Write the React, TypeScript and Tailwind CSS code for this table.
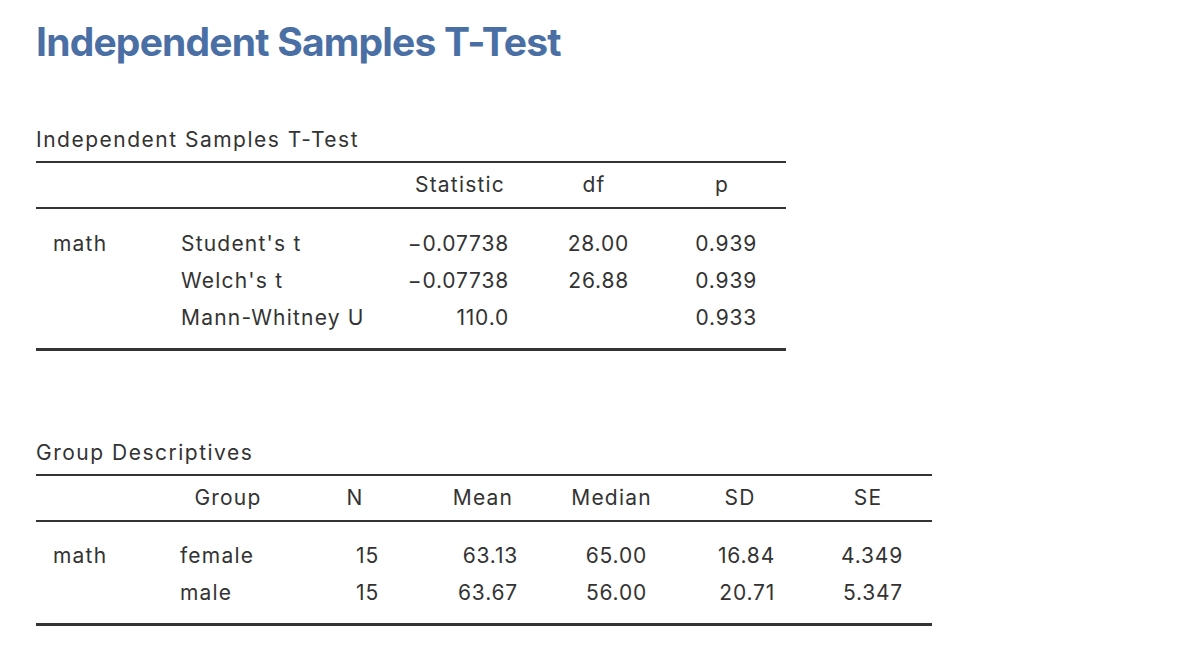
const FONT = { fontFamily: "Inter, 'Noto Sans', 'Liberation Sans', sans-serif" };

type Align = "left" | "center" | "right";

type Col = { w: number; head: string; align: Align; pad: string };

const T_TEST_COLS: Col[] = [
  { w: 129, head: "", align: "left", pad: "pl-[17px]" },
  { w: 225, head: "", align: "left", pad: "pl-[16px]" },
  { w: 140, head: "Statistic", align: "right", pad: "pr-[21px]" },
  { w: 128, head: "df", align: "right", pad: "pr-[29px]" },
  { w: 128, head: "p", align: "right", pad: "pr-[29px]" },
];

const T_TEST_ROWS = [
  ["math", "Student's t", "\u22120.07738", "28.00", "0.939"],
  ["", "Welch's t", "\u22120.07738", "26.88", "0.939"],
  ["", "Mann-Whitney U", "110.0", "", "0.933"],
];

const DESC_COLS: Col[] = [
  { w: 129, head: "", align: "left", pad: "pl-[17px]" },
  { w: 126, head: "Group", align: "left", pad: "pl-[15px]" },
  { w: 128, head: "N", align: "right", pad: "pr-[40px]" },
  { w: 128, head: "Mean", align: "right", pad: "pr-[29px]" },
  { w: 129, head: "Median", align: "right", pad: "pr-[29px]" },
  { w: 128, head: "SD", align: "right", pad: "pr-[29px]" },
  { w: 128, head: "SE", align: "right", pad: "pr-[29px]" },
];

const DESC_ROWS = [
  ["math", "female", "15", "63.13", "65.00", "16.84", "4.349"],
  ["", "male", "15", "63.67", "56.00", "20.71", "5.347"],
];

// labels are left aligned and a bit more spaced than the numbers
const cellClass: Record<Align, string> = {
  left: "text-left tracking-[1.2px]",
  center: "text-center tracking-[1px]",
  right: "text-right tracking-[0.8px]",
};

function ResultTable({
  title,
  cols,
  rows,
  bodyPad,
}: {
  title: string;
  cols: Col[];
  rows: string[][];
  bodyPad: string;
}) {
  const width = cols.reduce((s, c) => s + c.w, 0);
  return (
    <div style={{ width }}>
      <h3 className="text-[21px] leading-[24px] text-[#333333] tracking-[1.5px]">{title}</h3>
      <div className="mt-[9px] border-t-2 border-b-2 border-[#333333] h-[48px] flex">
        {cols.map((c, i) => (
          <div
            key={i}
            style={{ width: c.w }}
            className="shrink-0 text-center text-[21px] leading-[24px] tracking-[1.2px] pt-[10px] text-[#333333]"
          >
            {c.head}
          </div>
        ))}
      </div>
      <div className={`${bodyPad} pb-[12px] border-b-[3px] border-[#333333]`}>
        {rows.map((r, ri) => (
          <div key={ri} className="flex h-[37px]">
            {r.map((cell, ci) => (
              <div
                key={ci}
                style={{ width: cols[ci].w }}
                className={`shrink-0 text-[21px] leading-[37px] text-[#333333] whitespace-nowrap ${cellClass[cols[ci].align]} ${cols[ci].pad}`}
              >
                {cell}
              </div>
            ))}
          </div>
        ))}
      </div>
    </div>
  );
}

export default function App() {
  return (
    <div className="min-h-screen bg-white pl-[36px] pt-[18px]" style={FONT}>
      <h1 className="text-[39px] leading-[48px] font-bold text-[#4a6fa5] tracking-[-0.8px]">
        Independent Samples T-Test
      </h1>
      <div className="mt-[62px]">
        <ResultTable title="Independent Samples T-Test" cols={T_TEST_COLS} rows={T_TEST_ROWS} bodyPad="pt-[16px]" />
      </div>
      <div className="mt-[90px]">
        <ResultTable title="Group Descriptives" cols={DESC_COLS} rows={DESC_ROWS} bodyPad="pt-[15px]" />
      </div>
    </div>
  );
}
